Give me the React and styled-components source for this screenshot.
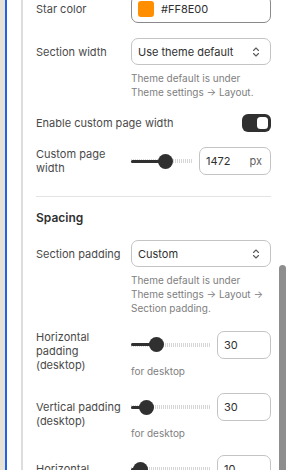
import React from "react";
import styled, { createGlobalStyle } from "styled-components";

const Global = createGlobalStyle`
  html, body { margin: 0; padding: 0; background: #ffffff; }
  body { font-family: Inter, "Noto Sans", "Liberation Sans", sans-serif; -webkit-font-smoothing: antialiased; }
  #root { height: 470px; overflow: hidden; }
`;

const Frame = styled.div`
  display: flex;
  height: 470px;
  overflow: hidden;
`;

const Desk = styled.div`
  width: 5px;
  flex: none;
  background: #e6e3d6;
`;

const Gutter = styled.div`
  width: 14px;
  flex: none;
  border-left: 2px solid #1f62ea;
  background: #ffffff;
`;

const Panel = styled.div`
  flex: 1;
  min-width: 0;
  border-left: 2px solid #dddddd;
  padding: 0 8px 0 13px;
  background: #ffffff;
`;

const Scrollbar = styled.div`
  width: 7px;
  flex: none;
  display: flex;
  flex-direction: column;
`;

const Thumb = styled.div`
  margin-top: 265px;
  flex: 1;
  background: #8e8e8e;
  border-radius: 4px 4px 0 0;
`;

const Content = styled.div`
  display: flex;
  flex-direction: column;
  gap: 15px;
  margin-top: -5px;
`;

const FieldGrid = styled.div`
  display: grid;
  grid-template-columns: 88px 1fr;
  column-gap: 7px;
  align-items: center;
`;

const Label = styled.div`
  font-size: 11px;
  line-height: 14px;
  color: #4a4a4a;
  padding-bottom: ${(p) => (p.$lift ? "6px" : "0")};
`;

const Help = styled.div`
  grid-column: 2;
  margin-top: 6px;
  font-size: 10px;
  line-height: 14px;
  color: #808080;
`;

const Box = styled.div`
  box-sizing: border-box;
  height: 28px;
  display: flex;
  align-items: center;
  border: 1px solid ${(p) => (p.$strong ? "#8a8a8a" : "#c4c4c4")};
  border-radius: 7px;
  background: #ffffff;
  font-size: 11px;
  color: #303030;
`;

const ColorBox = styled(Box)`
  padding: 0 6px;
  gap: 7px;
`;

const Swatch = styled.div`
  width: 16px;
  height: 16px;
  border-radius: 3px;
  background: ${(p) => p.$color};
`;

const SelectBox = styled(Box)`
  height: 27px;
  padding: 0 10px 0 6px;
  justify-content: space-between;
`;

const NumberBox = styled(Box)`
  width: ${(p) => p.$width}px;
  flex: none;
  padding: 0 8px 0 6px;
  justify-content: space-between;
`;

const Unit = styled.span`
  color: #616161;
`;

const ControlStack = styled.div`
  display: flex;
  flex-direction: column;
`;

const InputLine = styled.div`
  display: flex;
  align-items: center;
  gap: 7px;
`;

const SubHelp = styled.div`
  margin-top: 5px;
  font-size: 10px;
  line-height: 14px;
  color: #808080;
`;

const Track = styled.div`
  position: relative;
  flex: 1;
  height: 16px;
`;

const Rest = styled.div`
  position: absolute;
  left: 0;
  right: 0;
  top: 6px;
  height: 4px;
  background: repeating-linear-gradient(
    to right,
    #d6d6d6 0 1px,
    transparent 1px 2px
  );
`;

const Fill = styled.div`
  position: absolute;
  left: 0;
  top: 6.5px;
  height: 3px;
  background: #303030;
  border-radius: 2px;
`;

const Knob = styled.div`
  position: absolute;
  top: 0.5px;
  width: 15px;
  height: 15px;
  border-radius: 50%;
  background: #303030;
`;

const ToggleRow = styled.div`
  display: flex;
  align-items: center;
  justify-content: space-between;
`;

const Switch = styled.div`
  box-sizing: border-box;
  width: 29px;
  height: 18px;
  padding: 3px;
  border-radius: 6px;
  background: #303030;
  display: flex;
  justify-content: ${(p) => (p.$on ? "flex-end" : "flex-start")};
`;

const SwitchKnob = styled.div`
  width: 11px;
  height: 12px;
  border-radius: 3.5px;
  background: #ffffff;
`;

const Divider = styled.div`
  height: 1px;
  background: #e3e3e3;
  margin: 6px 0 -1px;
`;

const Heading = styled.div`
  font-size: 12px;
  line-height: 14px;
  font-weight: 600;
  color: #303030;
`;

const Chevrons = () => (
  <svg width="8" height="12" viewBox="0 0 8 12" fill="none">
    <path d="M1.5 4.5 L4 2 L6.5 4.5" stroke="#5c5c5c" strokeWidth="1.1" strokeLinecap="round" strokeLinejoin="round" />
    <path d="M1.5 7.5 L4 10 L6.5 7.5" stroke="#5c5c5c" strokeWidth="1.1" strokeLinecap="round" strokeLinejoin="round" />
  </svg>
);

const Slider = ({ pct }) => (
  <Track>
    <Rest />
    <Fill style={{ width: `calc(${pct} * (100% - 15px) + 7px)` }} />
    <Knob style={{ left: `calc(${pct} * (100% - 15px))` }} />
  </Track>
);

const SelectField = ({ label, value, help }) => (
  <FieldGrid>
    <Label>{label}</Label>
    <SelectBox>
      <span>{value}</span>
      <Chevrons />
    </SelectBox>
    {help && <Help>{help}</Help>}
  </FieldGrid>
);

const SliderField = ({ label, pct, value, unit, width, helper }) => (
  <FieldGrid>
    <Label $lift={!!helper}>{label}</Label>
    <ControlStack>
      <InputLine>
        <Slider pct={pct} />
        <NumberBox $width={width}>
          <span>{value}</span>
          {unit && <Unit>{unit}</Unit>}
        </NumberBox>
      </InputLine>
      {helper && <SubHelp>{helper}</SubHelp>}
    </ControlStack>
  </FieldGrid>
);

export default function App() {
  return (
    <>
      <Global />
      <Frame>
        <Desk />
        <Gutter />
        <Panel>
          <Content>
            <FieldGrid>
              <Label>Star color</Label>
              <ColorBox $strong>
                <Swatch $color="#FF8E00" />
                <span>#FF8E00</span>
              </ColorBox>
            </FieldGrid>
            <SelectField
              label="Section width"
              value="Use theme default"
              help={<>Theme default is under<br />Theme settings → Layout.</>}
            />
            <ToggleRow>
              <Label>Enable custom page width</Label>
              <Switch $on>
                <SwitchKnob />
              </Switch>
            </ToggleRow>
            <SliderField label="Custom page width" pct={0.59} value="1472" unit="px" width={72} />
            <Divider />
            <Heading>Spacing</Heading>
            <SelectField
              label="Section padding"
              value="Custom"
              help={<>Theme default is under<br />Theme settings → Layout →<br />Section padding.</>}
            />
            <SliderField label="Horizontal padding (desktop)" pct={0.28} value="30" width={54} helper="for desktop" />
            <SliderField label="Vertical padding (desktop)" pct={0.12} value="30" width={54} helper="for desktop" />
            <SliderField label="Horizontal padding" pct={0.03} value="10" width={54} helper="for mobile" />
          </Content>
        </Panel>
        <Scrollbar>
          <Thumb />
        </Scrollbar>
      </Frame>
    </>
  );
}
